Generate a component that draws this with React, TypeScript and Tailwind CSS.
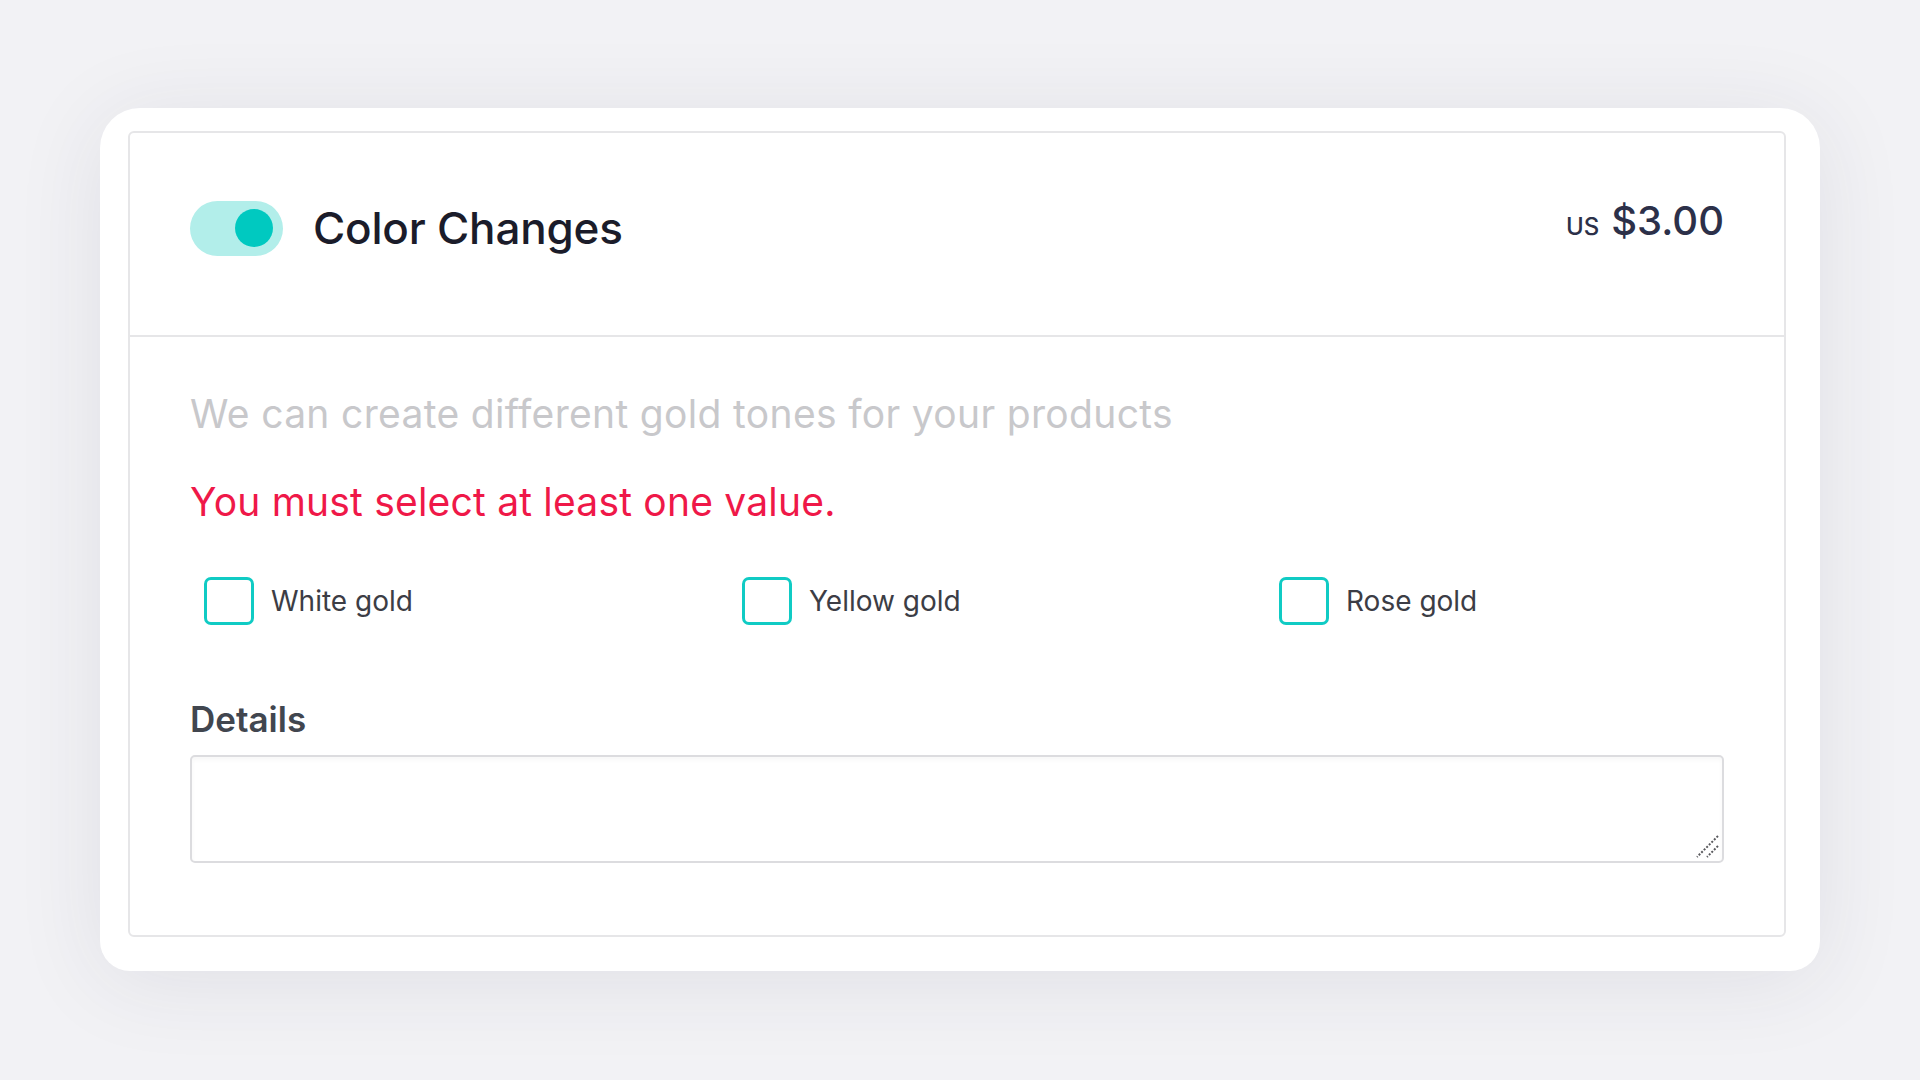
import React, { useState } from 'react';

const options = ['White gold', 'Yellow gold', 'Rose gold'];

const Toggle: React.FC<{ on: boolean; onChange: () => void }> = ({ on, onChange }) => (
  <button
    onClick={onChange}
    className={`flex h-[55px] w-[93px] shrink-0 items-center rounded-full px-[10px] ${on ? 'justify-end bg-[#b2eeea]' : 'justify-start bg-[#e4e4e7]'}`}
    aria-pressed={on}
  >
    <span className={`block h-[38px] w-[38px] rounded-full ${on ? 'bg-[#00c9c0]' : 'bg-white'}`} />
  </button>
);

const App: React.FC = () => {
  const [enabled, setEnabled] = useState(true);
  const [checked, setChecked] = useState<string[]>([]);

  const toggleOption = (name: string) =>
    setChecked((prev) => (prev.includes(name) ? prev.filter((n) => n !== name) : [...prev, name]));

  return (
    <div className="min-h-screen w-full bg-[#f2f2f5] pl-[100px] pt-[108px] font-['Inter',sans-serif]">
      {/* outer white frame */}
      <div className="h-[863px] w-[1720px] rounded-t-[40px] rounded-b-[30px] bg-white pb-[34px] pl-[28px] pr-[34px] pt-[23px] shadow-[0_10px_90px_rgba(40,40,80,0.09)]">
        <div className="flex h-full flex-col rounded-[6px] border-2 border-[#e6e6e8]">
          {/* header */}
          <div className="flex h-[204px] items-center justify-between border-b-2 border-[#e6e6e8] px-[60px] pb-[12px]">
            <div className="flex items-center gap-[30px]">
              <Toggle on={enabled} onChange={() => setEnabled(!enabled)} />
              <h2 className="text-[44px] font-medium leading-none tracking-[-0.2px] text-[#1b1c2a]">Color Changes</h2>
            </div>
            <div className="mb-[14px] flex items-baseline gap-[12px] text-[#2c3049]">
              <span className="text-[24px] font-medium leading-none">US</span>
              <span className="text-[40px] font-medium leading-none">$3.00</span>
            </div>
          </div>

          {/* body */}
          <div className="flex flex-col px-[60px] pt-[57px]">
            <p className="text-[39px] leading-none tracking-[0.33px] text-[#c8c8cb]">We can create different gold tones for your products</p>
            <p className="mt-[49px] text-[39px] leading-none tracking-[0.2px] text-[#ef1848]">You must select at least one value.</p>

            <div className="mt-[56px] grid grid-cols-[538px_537px_1fr] pl-[14px]">
              {options.map((name) => (
                <label key={name} className="flex cursor-pointer items-center gap-[17px]">
                  <input
                    type="checkbox"
                    checked={checked.includes(name)}
                    onChange={() => toggleOption(name)}
                    className="h-[48px] w-[50px] shrink-0 cursor-pointer appearance-none rounded-[7px] border-[3px] border-[#10cbc4] bg-white checked:bg-[#10cbc4]"
                  />
                  <span className="text-[28px] leading-none text-[#3c3d45]">{name}</span>
                </label>
              ))}
            </div>

            <label className="mt-[77px] text-[35px] font-semibold leading-none text-[#41464f]">Details</label>
            <div className="relative mt-[18px]">
              <textarea className="block h-[108px] w-full resize-none rounded-[5px] border-2 border-[#dcdcdf] bg-white px-4 py-3 text-[24px] shadow-[inset_0_3px_4px_rgba(0,0,0,0.03)] outline-none" />
              {/* resize grip */}
              <svg className="pointer-events-none absolute bottom-[3px] right-[3px]" width="26" height="26" viewBox="0 0 26 26">
                <path d="M23 2 L2 23" stroke="#5a5a5e" strokeWidth="2" strokeDasharray="2 1.6" />
                <path d="M23 12 L12 23" stroke="#5a5a5e" strokeWidth="2" strokeDasharray="2 1.6" />
              </svg>
            </div>
          </div>
        </div>
      </div>
    </div>
  );
};

export default App;
